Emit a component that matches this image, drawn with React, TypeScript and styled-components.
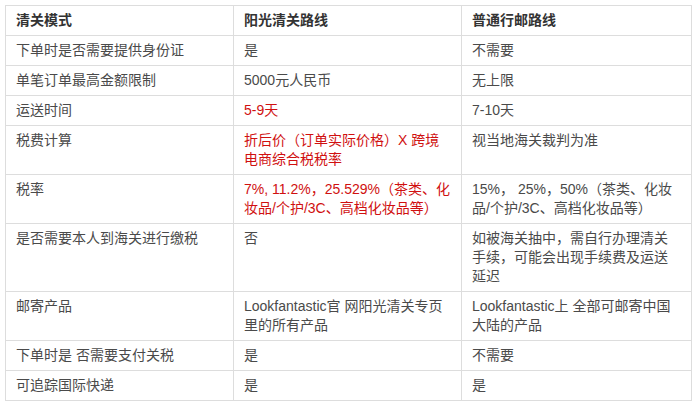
import React from 'react';
import styled, { createGlobalStyle } from 'styled-components';

const GlobalStyle = createGlobalStyle`
  html, body {
    margin: 0;
    padding: 0;
    background: #fff;
  }
  body {
    font-family: "Liberation Sans", "Noto Sans CJK SC", sans-serif;
  }
`;

const Page = styled.div`
  padding: 5px 0 0 5px;
`;

const Table = styled.table`
  width: 686px;
  table-layout: fixed;
  border-collapse: collapse;
  font-size: 14px;
  line-height: 19px;
  color: #444;
`;

const Cell = styled.td<{ $red?: boolean; $head?: boolean }>`
  border: 1px solid #ddd;
  padding: 5px 10px;
  vertical-align: top;
  white-space: nowrap;
  overflow: hidden;
  color: ${(p) => (p.$red ? '#d01010' : p.$head ? '#333' : '#4a4a4a')};
  font-weight: ${(p) => (p.$head ? 700 : 400)};
  text-align: left;
`;

type Row = {
  label: React.ReactNode;
  sun: React.ReactNode;
  post: React.ReactNode;
  red?: boolean;
};

const rows: Row[] = [
  { label: '下单时是否需要提供身份证', sun: '是', post: '不需要' },
  { label: '单笔订单最高金额限制', sun: '5000元人民币', post: '无上限' },
  { label: '运送时间', sun: '5-9天', post: '7-10天', red: true },
  {
    label: '税费计算',
    sun: (
      <>
        折后价（订单实际价格）X 跨境
        <br />
        电商综合税税率
      </>
    ),
    post: '视当地海关裁判为准',
    red: true,
  },
  {
    label: '税率',
    sun: (
      <>
        7%, 11.2%，25.529%（茶类、化
        <br />
        妆品/个护/3C、高档化妆品等）
      </>
    ),
    post: (
      <>
        15%， 25%，50%（茶类、化妆
        <br />
        品/个护/3C、高档化妆品等）
      </>
    ),
    red: true,
  },
  {
    label: '是否需要本人到海关进行缴税',
    sun: '否',
    post: (
      <>
        如被海关抽中，需自行办理清关
        <br />
        手续，可能会出现手续费及运送
        <br />
        延迟
      </>
    ),
  },
  {
    label: '邮寄产品',
    sun: (
      <>
        Lookfantastic官 网阳光清关专页
        <br />
        里的所有产品
      </>
    ),
    post: (
      <>
        Lookfantastic上 全部可邮寄中国
        <br />
        大陆的产品
      </>
    ),
  },
  { label: '下单时是 否需要支付关税', sun: '是', post: '不需要' },
  { label: '可追踪国际快递', sun: '是', post: '是' },
];

export default function App() {
  return (
    <>
      <GlobalStyle />
      <Page>
        <Table>
          <colgroup>
            <col style={{ width: 228 }} />
            <col style={{ width: 228 }} />
            <col style={{ width: 230 }} />
          </colgroup>
          <thead>
            <tr>
              <Cell as="th" $head>清关模式</Cell>
              <Cell as="th" $head>阳光清关路线</Cell>
              <Cell as="th" $head>普通行邮路线</Cell>
            </tr>
          </thead>
          <tbody>
            {rows.map((r, i) => (
              <tr key={i}>
                <Cell>{r.label}</Cell>
                <Cell $red={r.red}>{r.sun}</Cell>
                <Cell>{r.post}</Cell>
              </tr>
            ))}
          </tbody>
        </Table>
      </Page>
    </>
  );
}
